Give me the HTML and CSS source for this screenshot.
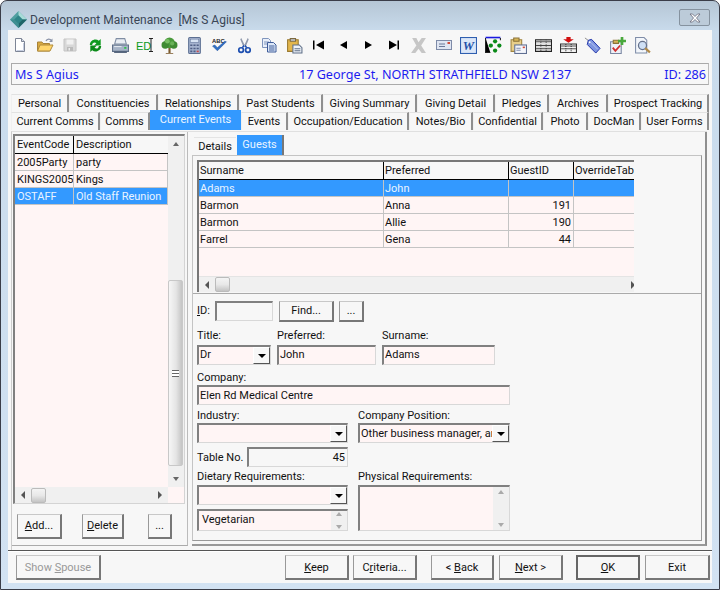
FILE: index.html
```html
<!DOCTYPE html>
<html lang="en">
<head>
<meta charset="utf-8">
<title>Development Maintenance</title>
<link rel="stylesheet" href="styles.css">
</head>
<body>
<div class="window">
  <header class="titlebar">
    <svg class="app-icon" viewBox="0 0 16 16"><polygon points="8,0 16,8 8,16 0,8" fill="#4f9fa0"/><polygon points="8,0 16,8 8,8" fill="#a9dcd8"/><polygon points="8,8 16,8 8,16" fill="#1f6468"/><polygon points="0,8 8,8 8,16" fill="#3f8f92"/><polygon points="4,8 8,4 12,8 8,12" fill="#2f8588"/></svg>
    <span class="title-text">Development Maintenance&nbsp; [Ms S Agius]</span>
    <button class="close-btn"><svg viewBox="0 0 12 10" width="12" height="10"><path d="M1 1h2.500l2.500 2.500L8.500 1H11L7.500 5 11 9H8.500L6 6.500 3.500 9H1l3.500-4z" fill="#fff" stroke="#667" stroke-width=".8"/></svg></button>
  </header>
  <div class="client">
    <div class="toolbar">
      <span class="tool"><svg viewBox="0 0 16 16"><path d="M3.500 1.500h6l3 3v10h-9z" fill="#fff" stroke="#7d8596"/><path d="M9.500 1.500v3h3" fill="#d5dbe8" stroke="#7d8596"/><path d="M4.500 13.500h7V6" fill="none" stroke="#c5cde0"/></svg></span>
      <span class="tool"><svg viewBox="0 0 16 16"><path d="M.5 5V14h12V6.500H6L5 5z" fill="#d9a93f" stroke="#a88338"/><path d="M.5 14L3 8h13l-3 6z" fill="#ffd56a" stroke="#b08b3c"/><path d="M9 4C10 1.500 13 1.500 14.500 3.500" fill="none" stroke="#8a93a8" stroke-width="1.300"/><path d="M15.500 1.500v3.500h-3.500z" fill="#8a93a8"/></svg></span>
      <span class="tool"><svg viewBox="0 0 16 16"><path d="M2 2h12v12H2z" fill="#d8d8d8" stroke="#c4c4c4"/><path d="M4.500 2.500h7v5h-7z" fill="#f1f1f1"/><path d="M5 10h6v4H5z" fill="#bbb"/><path d="M6.500 11h1.500v2.500H6.500z" fill="#eee"/></svg></span>
      <span class="tool"><svg viewBox="-1 -1 18 18" class="big"><path d="M2 7.500C2 2.500 8 0 11.500 3L13.500 1V8H6.500L9 5.500C7 4 4.500 5 4.500 7.500z" fill="#0d9a1e"/><path d="M14 8.500C14 13.500 8 16 4.500 13L2.500 15V8H9.500L7 10.500C9 12 11.500 11 11.500 8.500z" fill="#0a8a18"/></svg></span>
      <span class="tool"><svg viewBox="0 0 16 16" class="big"><path d="M4 1.500h8l1.500 5h-11z" fill="#e9edf3" stroke="#7f8da3"/><path d="M.5 7.500h15v6H.5z" fill="#a7b4c7" stroke="#5f6f88"/><path d="M2 13.500h12v1.500H2z" fill="#4f5f78"/><path d="M11.500 9.500h2v1.500h-2z" fill="#23c43c"/><path d="M2 9h7" stroke="#e4e9f0"/></svg></span>
      <span class="tool"><svg class="ed" viewBox="0 0 18 16"><text x="0" y="12.500" class="ed-text">ED</text><path d="M13 1.500h4M15 1.500v13M13 14.500h4" stroke="#222" fill="none"/></svg></span>
      <span class="tool"><svg viewBox="0 0 16 16" class="big"><path d="M7 10h2v5h2.500v.8h-7V15H7z" fill="#7b5a2d"/><circle cx="8" cy="5.500" r="5" fill="#4a9a3c"/><circle cx="4" cy="7.500" r="3.500" fill="#3f8a33"/><circle cx="12" cy="7.500" r="3.500" fill="#3f8a33"/><circle cx="6" cy="4" r="2.200" fill="#78be64"/><circle cx="10.500" cy="6" r="2" fill="#69b258"/></svg></span>
      <span class="tool"><svg viewBox="0 0 16 16" class="big"><rect x="2.500" y=".5" width="11" height="15" rx="1" fill="#a5b3cf" stroke="#5c6f92"/><rect x="4" y="2" width="8" height="3" fill="#d7e3f3" stroke="#62749a" stroke-width=".5"/><path d="M4 7h2v1.500H4zM7 7h2v1.500H7zM10 7h2v1.500h-2zM4 10h2v1.500H4zM7 10h2v1.500H7zM10 10h2v1.500h-2zM4 12.800h2v1.500H4zM7 12.800h2v1.500H7z" fill="#4f5f85"/><path d="M10 12.800h2v1.500h-2z" fill="#c84a4a"/></svg></span>
      <span class="tool"><svg viewBox="0 0 16 16" class="big"><text x="1" y="5.500" class="abc">ABC</text><path d="M1.500 8.500L6 13 14.500 4.500 13 4 6 10 3.500 7.500z" fill="#2f6fc4" stroke="#1f4f9a" stroke-width=".5"/></svg></span>
      <span class="tool"><svg viewBox="0 0 16 16" class="big"><path d="M5 1l3.500 7.500L7 9.500 4 2zM11 1L7.500 8.500 9 9.500 12 2z" fill="#8f99ad"/><circle cx="4.800" cy="12.300" r="2.200" fill="none" stroke="#1d4fb0" stroke-width="1.600"/><circle cx="11.200" cy="12.300" r="2.200" fill="none" stroke="#1d4fb0" stroke-width="1.600"/><path d="M6 10l1.500-2M10 10L8.500 8" stroke="#1d4fb0" stroke-width="1.500"/></svg></span>
      <span class="tool"><svg viewBox="0 0 16 16"><path d="M1.500 1.500h6l2 2v7h-8z" fill="#e9effa" stroke="#7f95bd"/><path d="M3 5h5M3 7h5" stroke="#7f95bd"/><path d="M6.500 5.500h6l2.500 2.500v7H6.500z" fill="#dce7f8" stroke="#3e5c9a"/><path d="M8 9h5.500M8 11h5.500M8 13h5.500" stroke="#3e5c9a"/></svg></span>
      <span class="tool"><svg viewBox="0 0 16 16" class="big"><path d="M1.500 2.500h10v11h-10z" fill="#e3b64c" stroke="#9a7a30"/><path d="M4 1.500h5v2.500H4z" fill="#c8cedb" stroke="#7c6a40"/><path d="M6.500 7.500h6l2.500 2.500v5H6.500z" fill="#eef2f8" stroke="#5f6f88"/><path d="M8 11h5.500M8 13h5.500" stroke="#5f6f88"/></svg></span>
      <span class="tool"><svg viewBox="0 0 16 16"><path d="M2 3.500h1.500v9H2zM13 3.500v9L5 8z" fill="#000"/></svg></span>
      <span class="tool"><svg viewBox="0 0 16 16"><path d="M11 4v8L4 8z" fill="#000"/></svg></span>
      <span class="tool"><svg viewBox="0 0 16 16"><path d="M4 4v8l7-4z" fill="#000"/></svg></span>
      <span class="tool"><svg viewBox="0 0 16 16"><path d="M3 3.500v9L11 8zM11.500 3.500H13v9h-1.500z" fill="#000"/></svg></span>
      <span class="tool"><svg viewBox="0 0 16 16" class="big"><path d="M2 1h4l2 4 3-4h4L10.500 8 15 15h-4L8 11l-3 4H1l5-7z" fill="#c6c6c6"/></svg></span>
      <span class="tool"><svg viewBox="0 0 16 16"><rect x=".5" y="3.500" width="15" height="9" fill="#dfe5f2" stroke="#7e8ba8"/><path d="M3 7h6M3 9.500h6" stroke="#6a7898"/><rect x="11.500" y="5" width="2.500" height="2" fill="#d04a3a"/></svg></span>
      <span class="tool"><svg viewBox="0 0 16 16" class="big"><rect x=".5" y=".5" width="15" height="15" fill="#dbe7f8" stroke="#2f5fb0"/><text x="8" y="12.500" class="word">W</text></svg></span>
      <span class="tool"><svg viewBox="0 0 16 16" class="big"><path d="M.5.500h14" stroke="#1a1ae0" stroke-width="1.500"/><path d="M.5 1v13.500H5M14.500 1v2" stroke="#222"/><circle cx="9.500" cy="4" r="2" fill="#0a8a18"/><circle cx="5.500" cy="8" r="2" fill="#0a8a18"/><circle cx="13.500" cy="8" r="2" fill="#0a8a18"/><circle cx="9.500" cy="12.800" r="2" fill="#0a8a18"/></svg></span>
      <span class="tool"><svg viewBox="0 0 16 16" class="big"><path d="M1 2.500h10v11H1z" fill="#e8cf8a" stroke="#a08440"/><path d="M3.500 1h5v3h-5z" fill="#d6b557" stroke="#8a7238"/><rect x="4.500" y="7.500" width="11" height="8" fill="#f4f6fb" stroke="#5f6f92"/><path d="M6 10.500h4M6 12.500h4" stroke="#7f8dae"/><rect x="12" y="9" width="2" height="1.500" fill="#d04a3a"/></svg></span>
      <span class="tool"><svg viewBox="0 0 16 16" class="big"><path d="M.5 2.500h15v11H.5z" fill="#f2f2f2" stroke="#222"/><path d="M1 4.500h14M1 8h14M1 11h14" stroke="#444"/><path d="M5.500 2.500v11M10.500 2.500v11" stroke="#333" stroke-dasharray="1 1"/><path d="M1 3h14v1H1z" fill="#999"/><path d="M1 6h14v1H1zM1 9h14v1H1z" fill="#cfcfcf"/></svg></span>
      <span class="tool"><svg viewBox="0 0 16 16" class="big"><path d="M6 0h4v2h3L8 5.500 3 2h3z" fill="#d10f0f"/><path d="M.5 6.500h15v8H.5z" fill="#f2f2f2" stroke="#333"/><path d="M1 8.500h14M1 11h14" stroke="#555"/><path d="M5.500 6.500v8M10.500 6.500v8" stroke="#333" stroke-dasharray="1 1"/></svg></span>
      <span class="tool"><svg viewBox="-1 -1 18 18" class="big"><path d="M0 0l4 3" stroke="#888" fill="none"/><path d="M3.500 2.500l3.500-1 9 9.500-4.500 5-9-9z" fill="#7e95e0" stroke="#1c2fa5"/><path d="M6.500 5l7 7" stroke="#b8c5f0"/><circle cx="5" cy="4.500" r="1" fill="#fff"/></svg></span>
      <span class="tool"><svg viewBox="0 0 16 16" class="big"><path d="M1.500 4.500h10v11h-10z" fill="#eef1f7" stroke="#7a86a2"/><path d="M4 3h5v3H4z" fill="#d6b557" stroke="#8a7238"/><path d="M3.500 10l2.500 3 4.500-5" stroke="#d02f2f" fill="none" stroke-width="1.700"/><path d="M11 0h2.500v2.500H16V5h-2.500v2.500H11V5H8.500V2.500H11z" fill="#49a83c"/></svg></span>
      <span class="tool"><svg viewBox="0 0 16 16" class="big"><path d="M1.500.5h8l2.500 2.500v12H1.500z" fill="#f3f6fb" stroke="#7f8da8"/><circle cx="8" cy="8" r="3.800" fill="#cfe0f5" stroke="#66718a" stroke-width="1.200"/><path d="M10.500 10.500l4.500 4" stroke="#b08a4a" stroke-width="2"/></svg></span>
    </div>

    <div class="infobar">
      <span class="info-name">Ms S Agius</span>
      <span class="info-address">17 George St, NORTH STRATHFIELD NSW 2137</span>
      <span class="info-id">ID: 286</span>
    </div>

    <nav class="tabs">
      <div class="tabrow tabrow-one">
        <span class="tab">Personal</span><span class="tab">Constituencies</span><span class="tab">Relationships</span><span class="tab">Past Students</span><span class="tab">Giving Summary</span><span class="tab">Giving Detail</span><span class="tab">Pledges</span><span class="tab">Archives</span><span class="tab">Prospect Tracking</span>
      </div>
      <div class="tabrow tabrow-two">
        <span class="tab">Current Comms</span><span class="tab">Comms</span><span class="tab tab-active">Current Events</span><span class="tab">Events</span><span class="tab">Occupation/Education</span><span class="tab">Notes/Bio</span><span class="tab">Confidential</span><span class="tab">Photo</span><span class="tab">DocMan</span><span class="tab">User Forms</span>
      </div>
    </nav>

    <main class="page">
      <section class="left-panel">
        <div class="event-grid">
          <div class="event-body">
            <div class="event-table">
              <div class="evrow evhead"><span>EventCode</span><span>Description</span></div>
              <div class="evrow"><span>2005Party</span><span>party</span></div>
              <div class="evrow"><span>KINGS2005</span><span>Kings</span></div>
              <div class="evrow evsel"><span>OSTAFF</span><span>Old Staff Reunion</span></div>
            </div>
            <div class="vscroll">
              <span class="arrow-up"></span>
              <div class="vtrack"><div class="vthumb"><span class="grip"></span></div></div>
              <span class="arrow-down"></span>
            </div>
          </div>
          <div class="hscroll event-hscroll">
            <span class="arrow-left"></span>
            <span class="hthumb"></span>
            <span class="hspace"></span>
            <span class="arrow-right"></span>
          </div>
        </div>
        <div class="event-actions">
          <button class="btn btn-add"><u>A</u>dd...</button>
          <button class="btn btn-delete"><u>D</u>elete</button>
          <button class="btn btn-more">...</button>
        </div>
      </section>

      <section class="right-panel">
        <div class="subtabs">
          <span class="subtab">Details</span><span class="subtab subtab-active">Guests</span>
        </div>
        <div class="subpage">
          <div class="guest-grid">
            <div class="grow ghead"><span>Surname</span><span>Preferred</span><span>GuestID</span><span>OverrideTab</span></div>
            <div class="grow gsel"><span>Adams</span><span>John</span><span></span><span></span></div>
            <div class="grow"><span>Barmon</span><span>Anna</span><span class="num">191</span><span></span></div>
            <div class="grow"><span>Barmon</span><span>Allie</span><span class="num">190</span><span></span></div>
            <div class="grow"><span>Farrel</span><span>Gena</span><span class="num">44</span><span></span></div>
            <div class="gfill"></div>
            <div class="hscroll guest-hscroll">
              <span class="arrow-left"></span>
              <span class="hthumb"></span>
              <span class="hspace"></span>
              <span class="arrow-right"></span>
            </div>
          </div>
          <div class="form">
            <div class="row-id">
              <label class="id-label"><u>I</u>D:</label>
              <span class="input id-input"></span>
              <button class="btn btn-find">Find...</button>
              <button class="btn btn-dots">...</button>
            </div>
            <div class="name-grid">
              <label class="lbl">Title:</label>
              <label class="lbl">Preferred:</label>
              <label class="lbl">Surname:</label>
              <span class="combo"><span class="combo-text">Dr</span><span class="combo-btn"></span></span>
              <span class="input">John</span>
              <span class="input">Adams</span>
            </div>
            <label class="lbl company-label">Company:</label>
            <span class="input company-input">Elen Rd Medical Centre</span>
            <div class="two-col">
              <div class="col">
                <label class="lbl col-top">Industry:</label>
                <span class="combo"><span class="combo-text"></span><span class="combo-btn"></span></span>
                <div class="table-row">
                  <label class="table-label">Table No.</label>
                  <span class="input input-num">45</span>
                </div>
                <label class="lbl">Dietary Requirements:</label>
                <span class="combo"><span class="combo-text"></span><span class="combo-btn"></span></span>
                <div class="listbox diet-list">
                  <span class="list-text">Vegetarian</span>
                  <span class="spin"><span class="arrow-up"></span><span class="arrow-down"></span></span>
                </div>
              </div>
              <div class="col">
                <label class="lbl col-top">Company Position:</label>
                <span class="combo"><span class="combo-text">Other business manager, ar</span><span class="combo-btn"></span></span>
                <div class="col-gap"></div>
                <label class="lbl">Physical Requirements:</label>
                <div class="listbox phys-list">
                  <span class="list-text"></span>
                  <span class="spin"><span class="arrow-up"></span><span class="arrow-down"></span></span>
                </div>
              </div>
            </div>
          </div>
        </div>
      </section>
    </main>

    <footer class="footer">
      <button class="btn btn-spouse" disabled>Show <u>S</u>pouse</button>
      <button class="btn btn-keep"><u>K</u>eep</button>
      <button class="btn btn-criteria">C<u>r</u>iteria...</button>
      <button class="btn btn-back">&lt; <u>B</u>ack</button>
      <button class="btn btn-next"><u>N</u>ext &gt;</button>
      <button class="btn btn-ok"><u>O</u>K</button>
      <button class="btn btn-exit">Exit</button>
    </footer>
  </div>
</div>
</body>
</html>
```
FILE: styles.css
```css
* { box-sizing: border-box; }
html, body { margin: 0; padding: 0; background: #fff; }
body { width: 720px; height: 590px; overflow: hidden; font: 11px/14px Roboto, "Noto Sans", sans-serif; color: #111; }

.window {
  width: 720px; height: 590px; border: 1px solid #3a3d48; border-radius: 7px 7px 0 0;
  background: linear-gradient(#b5c6d5 0, #c9dbec 30px, #d2e2f2 100%);
  padding: 0 7px 6px; display: flex; flex-direction: column;
}
.titlebar { height: 29px; display: flex; align-items: center; flex: none; padding: 8px 0 0 2px; }
.app-icon { width: 17px; height: 17px; margin-right: 3px; }
.title-text { font-size: 12px; color: #3a4656; }
.close-btn {
  margin-left: auto; margin-right: 2px; margin-top: -4px; width: 31px; height: 17px; padding: 0; display: flex; align-items: center; justify-content: center;
  border: 1px solid #85929f; border-radius: 2px; background: #bccbd9;
}

.client { flex: 1; background: #f7f7f7; display: flex; flex-direction: column; min-height: 0; }

.toolbar { height: 30px; display: flex; flex: none; align-items: center; }
.tool { width: 24.900px; display: flex; justify-content: center; flex: none; }
.tool svg { width: 16px; height: 16px; display: block; overflow: visible; }
.tool svg.big { width: 17px; height: 17px; }
.tool svg.ed { width: 18px; }
.ed-text { font: 11px "Liberation Sans", sans-serif; fill: #0a9a1a; }
.abc { font: bold 5.500px "Liberation Sans", sans-serif; fill: #222; }
.word { font: bold italic 12px "Liberation Serif", serif; fill: #1f4fa8; text-anchor: middle; }

.infobar {
  margin: 3px 0 0 3px; width: 698px; height: 22px; flex: none; padding: 1px 2px 0 3px;
  display: flex; align-items: center; color: #1c1cf0; font: 12.600px/14px "Noto Sans", sans-serif;
  border: 1px solid #aaa; border-right-color: #bbb;
}
.info-name { width: 284px; flex: none; }
.info-address { flex: 1; }

.tabs { margin: 9px 0 0 3px; width: 698px; flex: none; }
.tabrow { display: grid; height: 18px; }
.tabrow-one { grid-template-columns: 58px 89px 81px 84px 94px 78px 54px 59px 101px; }
.tabrow-two { grid-template-columns: 89px 50px 91px 47px 121px 64px 70px 45px 53px 68px; }
.tab {
  display: flex; align-items: center; justify-content: center; white-space: nowrap; height: 18px;
  background: #f7f7f7; border-top: 1px solid #e2e2e2; border-right: 2px solid #8f8f8f; border-left: 1px solid #f0f0f0;
}
.tab-active { background: #3399ff; color: #eef6ff; margin-top: -2px; height: 20px; border: 0; position: relative; }

.page {
  margin: 1px 0 0 3px; width: 696px; height: 419px; flex: none; display: flex;
  border-top: 1px solid #e0e0e0; border-left: 1px solid #ccc;
}

.left-panel { width: 176px; flex: none; padding: 2px 0 0 1px; border-right: 1px solid #bbb; border-bottom: 1px solid #aaa; margin-bottom: 4px; }
.event-grid {
  width: 172px; height: 370px; border: 2px solid #808080; border-right: 1px solid #d4d4d4; border-bottom: 1px solid #d4d4d4;
  background: #fff5f5; display: flex; flex-direction: column;
}
.event-body { flex: 1; display: flex; min-height: 0; }
.event-table { flex: 1; }
.evrow { display: grid; grid-template-columns: 59px 94px; height: 17px; border-bottom: 1px solid #c4c4c4; }
.evrow span { padding: 2px 0 0 2px; border-right: 1px solid #c4c4c4; white-space: nowrap; overflow: hidden; line-height: 14px; }
.evhead { height: 18px; background: #f7f7f7; border-bottom: 1px solid #000; }
.evhead span { border-right: 1px solid #000; }
.evhead span:last-child { border-right: 0; }
.evsel { background: #3399ff; color: #eaf4ff; }

.vscroll { width: 16px; flex: none; background: #f0f0f0; display: flex; flex-direction: column; align-items: center; }
.vtrack { flex: 1; width: 100%; padding-top: 128px; padding-bottom: 4px; display: flex; }
.vthumb {
  width: 15px; height: 186px; border: 1px solid #c8c8c8; border-radius: 2px;
  background: linear-gradient(90deg, #f6f6f6, #e4e4e4 55%, #c4c4c4); display: flex; align-items: center; justify-content: center; flex: none;
}
.grip { width: 7px; height: 7px; border-top: 1px solid #666; border-bottom: 1px solid #666; background: linear-gradient(#fff 0 2px, #666 2px 3px, #fff 3px); }

.arrow-up, .arrow-down, .arrow-left, .arrow-right { width: 0; height: 0; flex: none; border-style: solid; border-color: transparent; }
.arrow-up { border-width: 0 3.500px 4px; border-bottom-color: #666; margin: 6px auto; }
.arrow-down { border-width: 4px 3.500px 0; border-top-color: #666; margin: 6px auto; }
.arrow-left { border-width: 4px 4px 4px 0; border-right-color: #555; margin: 0 6px; }
.arrow-right { border-width: 4px 0 4px 4px; border-left-color: #555; margin: 0 6px; }

.hscroll { height: 16px; flex: none; background: #f0f0f0; display: flex; align-items: center; }
.event-hscroll { width: 153px; }
.hthumb { width: 15px; height: 15px; border: 1px solid #bbb; border-radius: 2px; background: linear-gradient(#f4f4f4, #e8e8e8 50%, #c4c4c4); flex: none; }
.hspace { flex: 1; }

.event-actions { display: flex; padding: 10px 0 0 4px; height: 35px; }
.btn {
  height: 25px; padding: 0; font: inherit; color: #111; background: #f7f7f7; display: block;
  border: 1px solid #c8c8c8; border-right: 2px solid #777; border-bottom: 2px solid #777; border-left-color: #999;
}
.btn-add { width: 45px; }
.btn-delete { width: 42px; margin-left: 20px; }
.btn-more { width: 24px; margin-left: 24px; }

.right-panel { flex: 1; margin-left: 4px; display: flex; flex-direction: column; border-right: 2px solid #8f8f8f; border-bottom: 2px solid #999; margin-bottom: 4px; }
.subtabs { height: 23px; display: flex; padding: 3px 0 0 2px; align-items: flex-end; flex: none; }
.subtab { width: 42px; height: 18px; display: flex; align-items: center; justify-content: center; border-top: 1px solid #e4e4e4; }
.subtab-active { width: 47px; height: 20px; background: #3399ff; color: #eaf4ff; border: 0; border-right: 2px solid #777; padding-bottom: 1px; margin-left: 1px; }
.subpage { flex: 1; border: 1px solid #c4c4c4; border-right: 1px solid #999; border-bottom: 1px solid #999; margin-right: 3px; margin-bottom: 3px; padding-top: 4px; min-height: 0; }

.guest-grid { margin-left: 4px; width: 437px; height: 132px; border-top: 2px solid #777; border-left: 2px solid #777; background: #fff5f5; display: flex; flex-direction: column; }
.grow { display: grid; grid-template-columns: 185px 125px 65px 60px; height: 17px; border-bottom: 1px solid #c4c4c4; flex: none; }
.grow span { padding: 1px 0 0 1px; border-right: 1px solid #c4c4c4; white-space: nowrap; overflow: hidden; line-height: 15px; }
.grow span:last-child { border-right: 0; }
.grow .num { text-align: right; padding-right: 2px; }
.ghead { height: 18px; background: #f7f7f7; border-bottom: 1px solid #000; }
.ghead span { border-right: 1px solid #000; }
.gsel { background: #3399ff; color: #eaf4ff; }
.gfill { flex: 1; border-bottom: 1px solid #e4e4e4; }
.guest-hscroll { height: 15px; overflow: hidden; }
.guest-hscroll .arrow-right { margin: 0 -1px 0 0; }

.form { margin-top: 1px; border-top: 1px solid #aaa; padding: 7px 0 0 4px; }
.row-id { display: flex; height: 20px; align-items: stretch; }
.id-label { width: 18px; line-height: 20px; }
.input, .combo, .listbox {
  display: block; height: 20px; background: #fff5f5; border: 2px solid #808080; border-right: 1px solid #d8d8d8; border-bottom: 1px solid #d8d8d8;
  padding-left: 1px; line-height: 16px; white-space: nowrap; overflow: hidden;
}
.id-input { width: 58px; background: #f7f7f7; }
.btn-find { width: 55px; margin-left: 6px; height: 21px; }
.btn-dots { width: 25px; margin-left: 5px; height: 21px; }

.name-grid { display: grid; grid-template-columns: 74px 99px 113px; column-gap: 6px; grid-template-rows: 17px 20px; margin-top: 7px; width: 300px; }
.lbl { display: block; height: 16px; line-height: 15px; white-space: nowrap; }
.company-label { margin-top: 5px; height: 15px; }
.company-input { width: 313px; line-height: 18px; }

.two-col { display: grid; grid-template-columns: 151px 152px; column-gap: 10px; margin-top: 2px; }
.col { display: flex; flex-direction: column; }
.col .col-top { line-height: 17px; }
.combo { display: flex; padding: 0; height: 20px; }
.combo-text { flex: 1; padding-left: 1px; overflow: hidden; }
.col .combo-text { line-height: 18px; }
.combo-btn {
  width: 17px; flex: none; background: #f7f7f7; border: 1px solid #fff; border-right: 1px solid #555; border-bottom: 1px solid #555;
  display: flex; align-items: center; justify-content: center;
}
.combo-btn::after { content: ""; border-style: solid; border-width: 4px 4px 0; border-color: #000 transparent transparent; }
.table-row { display: flex; height: 20px; margin-top: 4px; margin-bottom: 2px; }
.table-label { width: 50px; line-height: 22px; }
.input-num { width: 101px; text-align: right; padding-right: 2px; background: #f7f7f7; line-height: 18px; }
.diet-list { height: 22px; margin-top: 4px; display: flex; padding: 0; }
.phys-list { height: 46px; display: flex; padding: 0; }
.list-text { flex: 1; padding-left: 3px; line-height: 18px; }
.spin { width: 16px; flex: none; background: #f0f0f0; display: flex; flex-direction: column; justify-content: space-between; }
.spin .arrow-up, .spin .arrow-down { margin: 3px auto; border-bottom-color: #aaa; border-top-color: #aaa; }
.diet-list .spin .arrow-up, .diet-list .spin .arrow-down { margin: 1px auto; }
.col-gap { height: 26px; }

.footer { flex: none; height: 32px; border-top: 1px solid #555; display: flex; align-items: flex-start; padding: 4px 0 0 8px; box-shadow: inset 0 1px 0 #fff; }
.footer .btn { padding-top: 1px; }
.btn-spouse { width: 85px; color: #999; }
.btn-keep { width: 64px; margin-left: 184px; }
.btn-criteria { width: 64px; margin-left: 4px; }
.btn-back { width: 63px; margin-left: 14px; }
.btn-next { width: 64px; margin-left: 5px; }
.btn-ok { width: 64px; margin-left: 13px; border: 2px solid #666; }
.btn-exit { width: 65px; margin-left: 5px; }
```
